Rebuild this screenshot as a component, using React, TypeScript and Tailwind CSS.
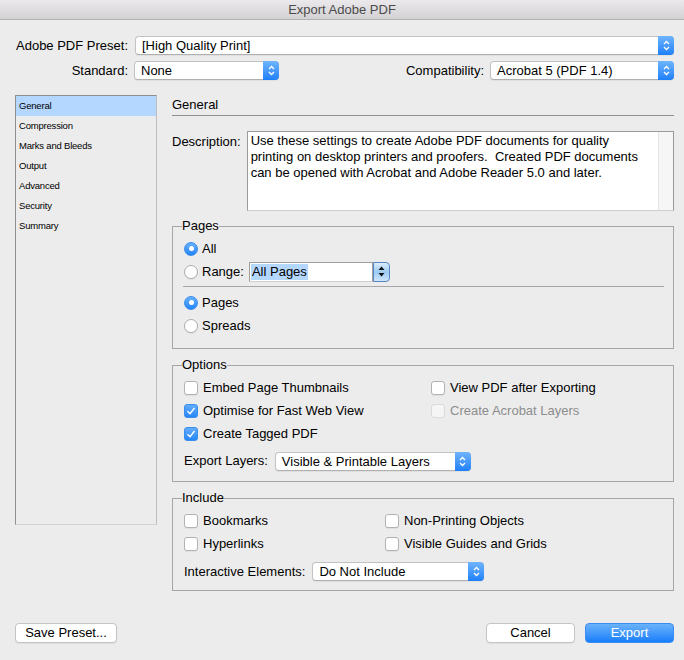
import type { ReactNode } from "react";

function Chevrons() {
  return (
    <svg width="7" height="11" viewBox="0 0 7 11" fill="none" stroke="white" strokeWidth="1.3">
      <polyline points="1,4 3.5,1.5 6,4" />
      <polyline points="1,7 3.5,9.5 6,7" />
    </svg>
  );
}

function Popup({ value, className = "" }: { value: string; className?: string }) {
  return (
    <div
      className={`flex h-[19px] items-stretch rounded-[4px] border border-[#c2c2c2] border-b-[#b0b0b0] bg-white shadow-[0_1px_1px_rgba(0,0,0,0.06)] ${className}`}
    >
      <span className="flex-1 truncate pl-[6px] leading-[17px] text-black">{value}</span>
      <span className="-my-px -mr-px flex w-[16px] items-center justify-center rounded-r-[4px] bg-linear-to-b from-[#6db4fb] to-[#1b80fa]">
        <Chevrons />
      </span>
    </div>
  );
}

function Radio({ on, children }: { on?: boolean; children: ReactNode }) {
  return (
    <label className="flex h-[23px] items-center gap-[4px]">
      {on ? (
        <span className="flex h-[14px] w-[14px] items-center justify-center rounded-full border border-[#3a8ef0] bg-linear-to-b from-[#68b0fb] to-[#1f85f8]">
          <span className="h-[5px] w-[5px] rounded-full bg-white" />
        </span>
      ) : (
        <span className="h-[14px] w-[14px] rounded-full border border-[#adadad] bg-white shadow-[0_1px_1px_rgba(0,0,0,0.06)]" />
      )}
      {children}
    </label>
  );
}

function Check({ on, disabled, children }: { on?: boolean; disabled?: boolean; children: ReactNode }) {
  let box = "border-[#b2b2b2] bg-white shadow-[0_1px_1px_rgba(0,0,0,0.06)]";
  if (on) box = "border-[#3a8ef0] bg-linear-to-b from-[#62acfb] to-[#2387f8]";
  if (disabled) box = "border-[#dadada] bg-[#f5f5f5]";
  return (
    <label className={`flex h-[23px] items-center gap-[5px] ${disabled ? "text-[#8c8c8c]" : ""}`}>
      <span className={`flex h-[14px] w-[14px] items-center justify-center rounded-[3px] border ${box}`}>
        {on && (
          <svg width="12" height="12" viewBox="0 0 12 12" fill="none" stroke="white" strokeWidth="1.4">
            <polyline points="2.5,6.2 5,8.8 9.5,3" />
          </svg>
        )}
      </span>
      {children}
    </label>
  );
}

function RangeField() {
  return (
    <div className="flex h-[20px] w-[141px]">
      <div className="flex flex-1 items-center border border-[#9e9e9e] border-b-[#cfcfcf] bg-white pl-px">
        <span className="bg-[#b3d7ff] px-[1px] leading-[16px]">All Pages</span>
      </div>
      <div className="flex w-[17px] items-center justify-center rounded-r-[4px] border border-[#5687c4] bg-linear-to-b from-[#dcedfd] via-[#9ccaf3] to-[#cfe6fb]">
        <svg width="7" height="13" viewBox="0 0 7 13" fill="#111">
          <polygon points="3.5,1.5 6.5,5 0.5,5" />
          <polygon points="0.5,8 6.5,8 3.5,11.5" />
        </svg>
      </div>
    </div>
  );
}

function Group({ title, className = "", children }: { title: string; className?: string; children: ReactNode }) {
  return (
    <fieldset className={`border border-[#a6a6a6] pl-[11px] pr-[9px] ${className}`}>
      <legend className="ml-[-2px] px-0 leading-[16px]">{title}</legend>
      {children}
    </fieldset>
  );
}

const sections = ["General", "Compression", "Marks and Bleeds", "Output", "Advanced", "Security", "Summary"];

export default function App() {
  return (
    <div className="h-[660px] w-[684px] overflow-hidden bg-[#ececec] font-['Liberation_Sans',Arial,sans-serif] text-[13px] leading-[16px] text-black">
      <div className="flex h-[20px] items-center justify-center border-b border-[#b2b2b2] bg-linear-to-b from-[#ebe9eb] to-[#d3d1d3] text-[#4b4b4b]">
        Export Adobe PDF
      </div>

      <div className="pl-[15px] pr-[10px] pt-[16px]">
        <div className="flex items-center gap-[7px]">
          <span className="w-[113px] text-right">Adobe PDF Preset:</span>
          <Popup value="[High Quality Print]" className="flex-1" />
        </div>
        <div className="mt-[6px] flex items-center">
          <span className="w-[113px] text-right">Standard:</span>
          <Popup value="None" className="ml-[6px] w-[145px]" />
          <span className="ml-auto">Compatibility:</span>
          <Popup value="Acrobat 5 (PDF 1.4)" className="ml-[6px] w-[184px]" />
        </div>

        <div className="mt-[15px] flex items-start">
          <div className="h-[430px] w-[142px] border border-[#8f8f8f] border-r-[#bdbdbd] border-b-[#d2d2d2] text-[9.5px] tracking-[-0.2px]">
            {sections.map((s, i) => (
              <div key={s} className={`flex h-[20px] items-center pl-[3px] ${i === 0 ? "bg-[#b3d7ff]" : ""}`}>
                {s}
              </div>
            ))}
          </div>

          <div className="ml-[15px] flex-1">
            <div className="flex h-[21px] items-center border-b border-[#8f8f8f]">General</div>

            <div className="mt-[15px] flex items-start gap-[6px]">
              <span className="mt-[3px]">Description:</span>
              <div className="flex h-[80px] flex-1 border border-[#9a9a9a] border-b-[#cdcdcd] bg-white">
                <div className="flex-1 whitespace-pre pl-[3px] pt-px leading-[16px]">
                  {"Use these settings to create Adobe PDF documents for quality\nprinting on desktop printers and proofers.  Created PDF documents\ncan be opened with Acrobat and Adobe Reader 5.0 and later."}
                </div>
                <div className="w-[15px] border-l border-[#e4e4e4] bg-[#f6f6f6]" />
              </div>
            </div>

            <Group title="Pages" className="mt-[7px] pb-[11px]">
              <div className="pt-[3px]">
                <Radio on>All</Radio>
                <Radio>
                  <span className="mr-[1px]">Range:</span>
                  <RangeField />
                </Radio>
              </div>
              <div className="ml-[-1px] mt-[3px] h-px bg-[#a6a6a6]" />
              <div className="mt-[4px]">
                <Radio on>Pages</Radio>
                <Radio>Spreads</Radio>
              </div>
            </Group>

            <Group title="Options" className="mt-[8px] pb-[9px]">
              <div className="grid grid-cols-[247px_1fr] pt-[3px]">
                <Check>Embed Page Thumbnails</Check>
                <Check>View PDF after Exporting</Check>
                <Check on>Optimise for Fast Web View</Check>
                <Check disabled>Create Acrobat Layers</Check>
                <Check on>Create Tagged PDF</Check>
              </div>
              <div className="mt-[5px] flex h-[22px] items-center gap-[7px]">
                <span>Export Layers:</span>
                <Popup value="Visible & Printable Layers" className="w-[196px]" />
              </div>
            </Group>

            <Group title="Include" className="mt-[8px] pb-[8px]">
              <div className="grid grid-cols-[201px_1fr] pt-[3px]">
                <Check>Bookmarks</Check>
                <Check>Non-Printing Objects</Check>
                <Check>Hyperlinks</Check>
                <Check>Visible Guides and Grids</Check>
              </div>
              <div className="mt-[6px] flex h-[21px] items-center gap-[7px]">
                <span>Interactive Elements:</span>
                <Popup value="Do Not Include" className="w-[172px]" />
              </div>
            </Group>
          </div>
        </div>

        <div className="mt-[32px] flex items-center">
          <button className="h-[20px] w-[102px] rounded-[4px] border border-[#c4c4c4] bg-white shadow-[0_1px_1px_rgba(0,0,0,0.06)]">
            Save Preset...
          </button>
          <button className="ml-auto h-[20px] w-[89px] rounded-[4px] border border-[#c4c4c4] bg-white shadow-[0_1px_1px_rgba(0,0,0,0.06)]">
            Cancel
          </button>
          <button className="ml-[10px] h-[20px] w-[89px] rounded-[4px] border border-[#3b8cf2] bg-linear-to-b from-[#6ab2fb] to-[#127efa] text-white">
            Export
          </button>
        </div>
      </div>
    </div>
  );
}
